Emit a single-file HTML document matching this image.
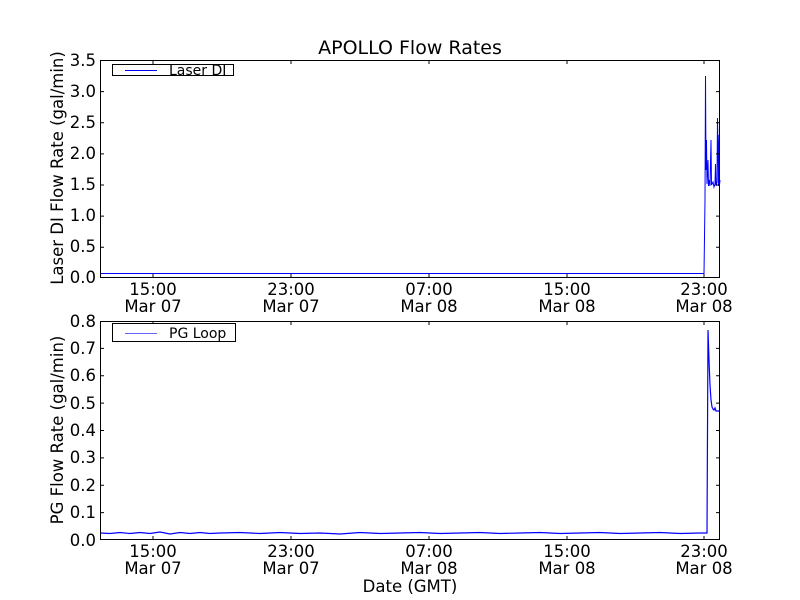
<!DOCTYPE html>
<html><head><meta charset="utf-8"><style>
html,body{margin:0;padding:0;background:#fff;}
svg{display:block;}
text{font-family:"DejaVu Sans","Liberation Sans",sans-serif;fill:#000;}
</style></head><body>
<svg width="800" height="600" viewBox="0 0 800 600" xmlns="http://www.w3.org/2000/svg">
<rect width="800" height="600" fill="#fff"/>
<text x="410" y="54" font-size="19" text-anchor="middle">APOLLO Flow Rates</text>

<!-- TOP AXES -->
<g>
<path d="M100,273.5 H704 L705,200 L705.5,76 L706,170 L706.5,140 L707,184 L708,160 L708.5,186 L709.5,180 L710,186 L711,140 L711.5,185 L713,182 L714,187 L715,184 L715.5,164 L716,186 L717,182 L717.5,118 L718,150 L718.5,186 L719,135 L719.5,185 L720,180" fill="none" stroke="#00f" stroke-width="1"/>
<rect x="100.5" y="60.5" width="619" height="217" fill="none" stroke="#000" stroke-width="1"/>
<g stroke="#000" stroke-width="1">
<path d="M153,60v4M291,60v4M429,60v4M567,60v4M704,60v4M153,278v-4M291,278v-4M429,278v-4M567,278v-4M704,278v-4"/>
<path d="M100,91.6h4M100,122.7h4M100,153.9h4M100,185h4M100,216.1h4M100,247.3h4M720,91.6h-4M720,122.7h-4M720,153.9h-4M720,185h-4M720,216.1h-4M720,247.3h-4"/>
</g>
<g font-size="16.5" text-anchor="end">
<text x="96" y="66">3.5</text><text x="96" y="97">3.0</text><text x="96" y="128">2.5</text><text x="96" y="159">2.0</text><text x="96" y="190">1.5</text><text x="96" y="221">1.0</text><text x="96" y="252">0.5</text><text x="96" y="283">0.0</text>
</g>
<g font-size="16.5" text-anchor="middle">
<text x="153" y="295">15:00</text><text x="153" y="312">Mar 07</text>
<text x="291" y="295">23:00</text><text x="291" y="312">Mar 07</text>
<text x="429" y="295">07:00</text><text x="429" y="312">Mar 08</text>
<text x="567" y="295">15:00</text><text x="567" y="312">Mar 08</text>
<text x="704" y="295">23:00</text><text x="704" y="312">Mar 08</text>
</g>
<text font-size="16.5" text-anchor="middle" transform="translate(63,168) rotate(-90)">Laser DI Flow Rate (gal/min)</text>
<rect x="112.5" y="64.5" width="121" height="11" fill="#fff" stroke="#000"/>
<path d="M125,70.5h32" stroke="#00f" stroke-width="1"/>
<text x="169" y="75" font-size="14">Laser DI</text>
</g>

<!-- BOTTOM AXES -->
<g>
<path d="M100,533 L110,533.5 L120,532.5 L130,533.5 L140,532.5 L150,533.5 L160,532 L170,534 L180,532.5 L190,533.5 L200,532.5 L210,533.5 L220,533 L240,532.5 L260,533.5 L280,532.5 L300,533.5 L320,533 L340,534 L360,532.5 L380,533.5 L400,533 L420,532.5 L440,533.5 L460,533 L480,532.5 L500,533.5 L520,533 L540,532.5 L560,533.5 L580,533 L600,532.5 L620,533.5 L640,533 L660,532.5 L680,533.5 L700,533 L707,533 L708,330 L709,360 L710,385 L711,400 L712,407 L713,409 L714,410 L715,408 L716,411 L720,411" fill="none" stroke="#00f" stroke-width="1.2"/>
<rect x="100.5" y="321.5" width="619" height="218" fill="none" stroke="#000" stroke-width="1"/>
<g stroke="#000" stroke-width="1">
<path d="M153,321v4M291,321v4M429,321v4M567,321v4M704,321v4M153,540v-4M291,540v-4M429,540v-4M567,540v-4M704,540v-4"/>
<path d="M100,348.4h4M100,375.8h4M100,403.1h4M100,430.5h4M100,457.9h4M100,485.3h4M100,512.6h4M720,348.4h-4M720,375.8h-4M720,403.1h-4M720,430.5h-4M720,457.9h-4M720,485.3h-4M720,512.6h-4"/>
</g>
<g font-size="16.5" text-anchor="end">
<text x="96" y="327">0.8</text><text x="96" y="354">0.7</text><text x="96" y="381">0.6</text><text x="96" y="409">0.5</text><text x="96" y="436">0.4</text><text x="96" y="463">0.3</text><text x="96" y="491">0.2</text><text x="96" y="518">0.1</text><text x="96" y="546">0.0</text>
</g>
<g font-size="16.5" text-anchor="middle">
<text x="153" y="557">15:00</text><text x="153" y="574">Mar 07</text>
<text x="291" y="557">23:00</text><text x="291" y="574">Mar 07</text>
<text x="429" y="557">07:00</text><text x="429" y="574">Mar 08</text>
<text x="567" y="557">15:00</text><text x="567" y="574">Mar 08</text>
<text x="704" y="557">23:00</text><text x="704" y="574">Mar 08</text>
</g>
<text x="410" y="592" font-size="16.5" text-anchor="middle">Date (GMT)</text>
<text font-size="16.5" text-anchor="middle" transform="translate(63,430) rotate(-90)">PG Flow Rate (gal/min)</text>
<rect x="112.5" y="323.5" width="123" height="18" fill="#fff" stroke="#000"/>
<path d="M125,333.5h32" stroke="#00f" stroke-opacity="0.6" stroke-width="1"/>
<text x="169" y="338" font-size="14">PG Loop</text>
</g>
</svg>
</body></html>
